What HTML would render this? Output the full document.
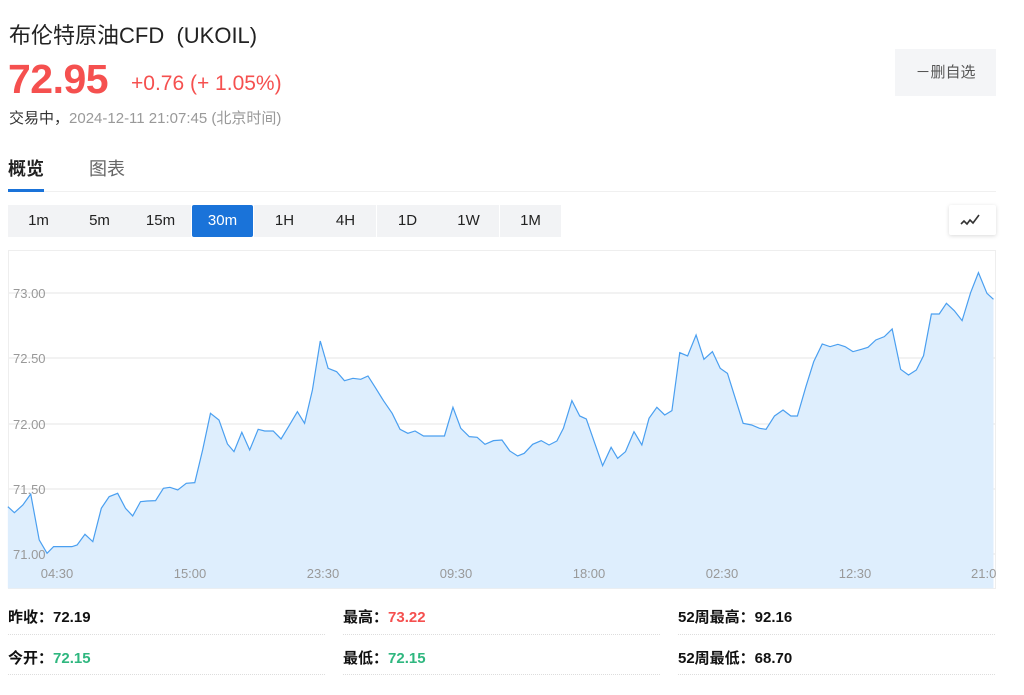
<!DOCTYPE html>
<html><head><meta charset="utf-8"><style>
*{margin:0;padding:0;box-sizing:border-box}
body{width:1024px;height:695px;background:#fff;font-family:"Liberation Sans","Noto Sans CJK SC",sans-serif;color:#222;position:relative;overflow:hidden}
.a{position:absolute;white-space:nowrap}
.tf{position:absolute;top:205px;height:32px;width:61px;background:#f2f3f5;font-size:15px;line-height:32px;text-align:center;color:#222}
.tf.on{background:#1a73d9;color:#fff;border-radius:2px}
.st{position:absolute;font-size:15px;font-weight:bold;color:#111}
.ln{position:absolute;height:0;border-top:1px dotted #ddd;width:317px}
</style></head><body>
<div class="a" style="left:9px;top:18px;font-size:22px;color:#222">布伦特原油CFD&nbsp;&nbsp;(UKOIL)</div>
<div class="a" style="left:8px;top:56px;font-size:41px;font-weight:bold;color:#f5504f;letter-spacing:-0.5px">72.95</div>
<div class="a" style="left:131px;top:72px;font-size:21px;color:#f5504f">+0.76 (+ 1.05%)</div>
<div class="a" style="left:9px;top:107px;font-size:15px;color:#333">交易中，<span style="color:#999">2024-12-11 21:07:45 (北京时间)</span></div>
<div class="a" style="left:895px;top:49px;width:101px;height:47px;background:#f4f5f7;font-size:15px;line-height:47px;text-align:center;color:#555">－删自选</div>
<div class="a" style="left:8px;top:155px;font-size:18px;font-weight:bold;color:#222">概览</div>
<div class="a" style="left:89px;top:155px;font-size:18px;color:#666">图表</div>
<div class="a" style="left:8px;top:191px;width:988px;height:1px;background:#f0f0f0"></div>
<div class="a" style="left:8px;top:189px;width:36px;height:3px;background:#1a73d9"></div>
<div class="tf" style="left:8px">1m</div><div class="tf" style="left:69px">5m</div><div class="tf" style="left:130px">15m</div><div class="tf on" style="left:192px">30m</div><div class="tf" style="left:254px">1H</div><div class="tf" style="left:315px">4H</div><div class="tf" style="left:377px">1D</div><div class="tf" style="left:438px">1W</div><div class="tf" style="left:500px;width:61px">1M</div>
<div class="a" style="left:949px;top:205px;width:47px;height:30px;background:#fff;box-shadow:0 1px 4px rgba(0,0,0,.15);border-radius:2px">
<svg width="47" height="30"><polyline points="12,19 15,16 18,19 21,15 24,18 30,10" fill="none" stroke="#333" stroke-width="1.6"/></svg></div>
<svg class="a" style="left:0;top:0" width="1024" height="695">
<rect x="8.5" y="250.5" width="987" height="338" fill="none" stroke="#eee"/>
<g stroke="#eee" stroke-width="1.5"><line x1="8" y1="293" x2="996" y2="293"/><line x1="8" y1="358" x2="996" y2="358"/><line x1="8" y1="424" x2="996" y2="424"/><line x1="8" y1="489" x2="996" y2="489"/><line x1="8" y1="554" x2="996" y2="554"/></g>
<g transform="translate(0,240) scale(0.6536,0.3333)">
<polygon fill="#deeefd" points="12,1045 12,800 22,818 35,795 47,762 60,900 72,940 82,920 110,920 118,915 130,883 142,905 155,805 167,770 180,760 192,805 203,828 215,785 225,783 238,782 250,745 260,742 272,750 285,730 298,728 310,630 322,520 335,540 348,612 358,635 370,577 382,630 395,568 405,573 418,573 430,597 443,555 455,515 466,550 478,450 490,303 502,385 515,395 527,422 540,415 552,418 563,408 575,445 587,483 600,520 612,568 624,580 635,573 648,588 680,588 693,502 705,565 718,590 730,592 742,613 755,602 768,600 780,633 792,648 802,640 815,613 828,602 840,615 852,603 862,565 875,482 887,528 897,537 910,610 922,677 935,622 945,655 957,635 970,575 982,615 993,535 1005,502 1017,525 1028,512 1040,338 1052,348 1065,285 1077,358 1090,335 1102,385 1113,400 1125,475 1137,550 1150,555 1162,565 1172,568 1185,528 1198,510 1210,528 1220,528 1233,440 1245,365 1258,312 1270,320 1282,313 1293,320 1305,335 1318,328 1328,322 1340,300 1353,290 1365,267 1378,388 1390,405 1402,390 1413,347 1425,222 1437,222 1448,190 1460,212 1472,242 1485,158 1497,98 1510,160 1520,178 1520,1045"/>
<polyline fill="none" stroke="#4a9ff0" stroke-width="1.2" vector-effect="non-scaling-stroke" points="12,800 22,818 35,795 47,762 60,900 72,940 82,920 110,920 118,915 130,883 142,905 155,805 167,770 180,760 192,805 203,828 215,785 225,783 238,782 250,745 260,742 272,750 285,730 298,728 310,630 322,520 335,540 348,612 358,635 370,577 382,630 395,568 405,573 418,573 430,597 443,555 455,515 466,550 478,450 490,303 502,385 515,395 527,422 540,415 552,418 563,408 575,445 587,483 600,520 612,568 624,580 635,573 648,588 680,588 693,502 705,565 718,590 730,592 742,613 755,602 768,600 780,633 792,648 802,640 815,613 828,602 840,615 852,603 862,565 875,482 887,528 897,537 910,610 922,677 935,622 945,655 957,635 970,575 982,615 993,535 1005,502 1017,525 1028,512 1040,338 1052,348 1065,285 1077,358 1090,335 1102,385 1113,400 1125,475 1137,550 1150,555 1162,565 1172,568 1185,528 1198,510 1210,528 1220,528 1233,440 1245,365 1258,312 1270,320 1282,313 1293,320 1305,335 1318,328 1328,322 1340,300 1353,290 1365,267 1378,388 1390,405 1402,390 1413,347 1425,222 1437,222 1448,190 1460,212 1472,242 1485,158 1497,98 1510,160 1520,178"/>
</g>
<g font-size="13" fill="#999" font-family="Liberation Sans,sans-serif"><text x="13" y="298">73.00</text><text x="13" y="363">72.50</text><text x="13" y="429">72.00</text><text x="13" y="494">71.50</text><text x="13" y="559">71.00</text>
<g text-anchor="middle"><text x="57" y="578">04:30</text><text x="190" y="578">15:00</text><text x="323" y="578">23:30</text><text x="456" y="578">09:30</text><text x="589" y="578">18:00</text><text x="722" y="578">02:30</text><text x="855" y="578">12:30</text></g><text x="971" y="578">21:0</text></g>
</svg>
<div class="st" style="left:8px;top:606px">昨收：72.19</div>
<div class="st" style="left:343px;top:606px">最高：<span style="color:#f5504f">73.22</span></div>
<div class="st" style="left:678px;top:606px">52周最高：92.16</div>
<div class="st" style="left:8px;top:647px">今开：<span style="color:#2fb77f">72.15</span></div>
<div class="st" style="left:343px;top:647px">最低：<span style="color:#2fb77f">72.15</span></div>
<div class="st" style="left:678px;top:647px">52周最低：68.70</div>
<div class="ln" style="left:8px;top:634px"></div><div class="ln" style="left:343px;top:634px"></div><div class="ln" style="left:678px;top:634px"></div>
<div class="ln" style="left:8px;top:674px"></div><div class="ln" style="left:343px;top:674px"></div><div class="ln" style="left:678px;top:674px"></div>
</body></html>
